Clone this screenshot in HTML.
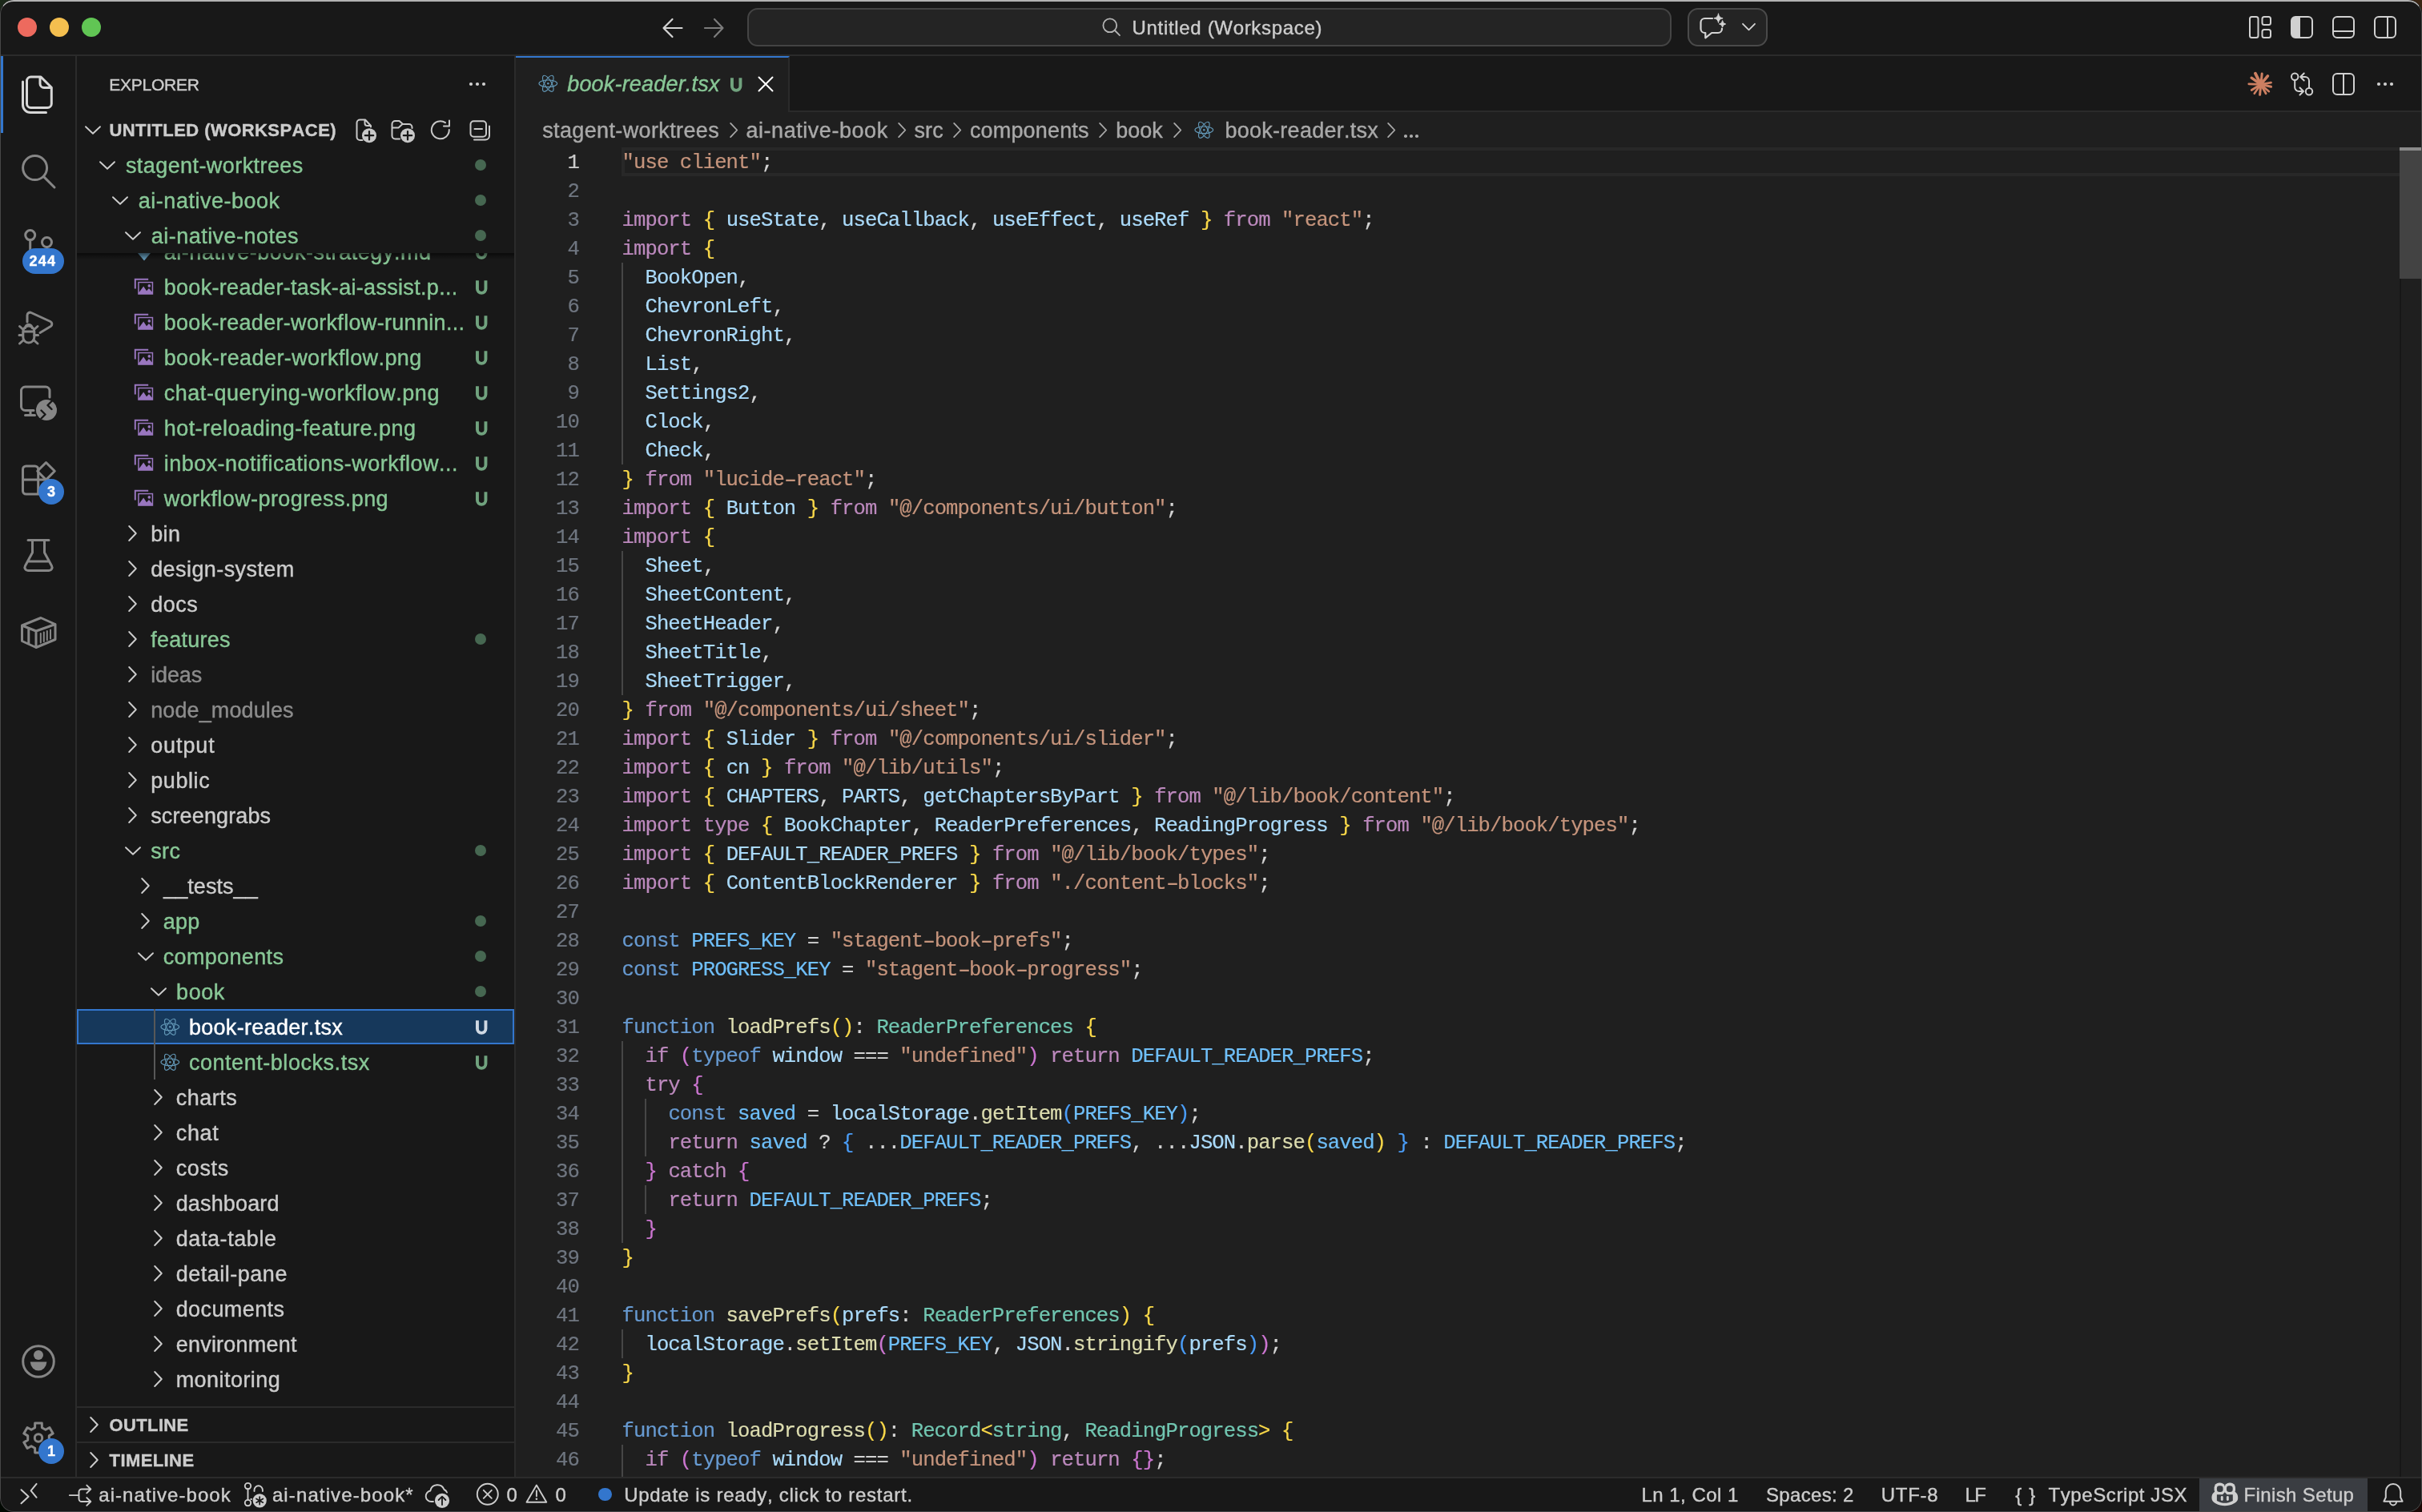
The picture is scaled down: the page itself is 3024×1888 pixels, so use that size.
<!DOCTYPE html><html><head><meta charset="utf-8"><title>VS Code</title><style>
*{box-sizing:border-box;margin:0;padding:0}
html,body{width:3024px;height:1888px;overflow:hidden;background:#0b0f0a}
body{font-family:"Liberation Sans",sans-serif;color:#ccc;position:relative}
#win{position:absolute;left:0;top:0;width:3024px;height:1888px;background:#181818;border-radius:17px;overflow:hidden;will-change:transform;font-kerning:none}
.abs{position:absolute}
.t{position:absolute;white-space:pre;line-height:1;-webkit-text-stroke:0.4px}
.ui{font-size:27px;letter-spacing:.4px}
svg{position:absolute;overflow:visible}
.code{font-family:"Liberation Mono",monospace;font-size:25.6px;letter-spacing:-0.914px;line-height:36px;white-space:pre;position:absolute;left:776.6px;height:36px;color:#d4d4d4;-webkit-text-stroke:0.2px}
.ln{font-family:"Liberation Mono",monospace;font-size:25.6px;letter-spacing:-0.914px;line-height:36px;position:absolute;left:644px;width:79px;text-align:right;color:#6f7680;height:36px;-webkit-text-stroke:0.2px}
.hy{display:inline-block;transform:translateY(1.2px) scaleX(1.6)}
.k{color:#bc89bd}.v{color:#aadafa}.s{color:#c5947c}.b1{color:#f9d849}.b2{color:#cc76d1}.b3{color:#4a9df8}
.c{color:#679ad1}.f{color:#dcdcaf}.ty{color:#71c6b1}.cn{color:#6fbff9}.p{color:#d4d4d4}
</style></head><body><div class="abs" style="left:0;top:0;width:30px;height:30px;background:#1b2819"></div><div class="abs" style="right:0;top:0;width:30px;height:30px;background:#3a2513"></div><div class="abs" style="left:0;bottom:0;width:30px;height:30px;background:#030903"></div><div class="abs" style="right:0;bottom:0;width:30px;height:30px;background:#1a0705"></div><div id="win">
<div class="abs" style="left:0px;top:0px;width:3024px;height:70px;background:#181818;border-bottom:2px solid #2b2b2b"></div>
<div class="abs" style="left:22px;top:22px;width:24px;height:24px;background:#ed6a5e;border-radius:50%"></div>
<div class="abs" style="left:62px;top:22px;width:24px;height:24px;background:#f4bf4f;border-radius:50%"></div>
<div class="abs" style="left:102px;top:22px;width:24px;height:24px;background:#61c554;border-radius:50%"></div>
<div class="abs" style="left:933px;top:10px;width:1154px;height:48px;background:#242424;border:2px solid #444;border-radius:13px"></div>
<div class="t" style="left:1413.5px;top:22.7px;font-size:24px;color:#cccccc;letter-spacing:0.678px;font-weight:400;font-style:normal;">Untitled (Workspace)</div>
<div class="abs" style="left:2107px;top:10px;width:100px;height:48px;background:#242424;border:2px solid #4a4a4a;border-radius:13px"></div>
<div class="abs" style="left:0px;top:70px;width:96px;height:1774px;background:#181818;border-right:2px solid #2b2b2b"></div>
<div class="abs" style="left:0px;top:70px;width:4px;height:96px;background:#3376cd;"></div>
<div class="abs" style="left:96px;top:70px;width:548px;height:1774px;background:#181818;border-right:2px solid #2b2b2b"></div>
<div class="t" style="left:136.3px;top:95.4px;font-size:21px;color:#cccccc;letter-spacing:-0.243px;font-weight:400;font-style:normal;">EXPLORER</div>
<svg style="left:169px;top:302px" width="22" height="24" viewBox="0 0 22 24"><path d="M6 1 H16 V10.5 H22 L11 23.4 L0 10.5 H6 Z" fill="#6398b7"/></svg>
<div class="t" style="left:204.7px;top:302.1px;font-size:27px;color:#88c796;letter-spacing:0.55px;font-weight:400;font-style:normal;">ai-native-book-strategy.md</div>
<svg style="left:592.9px;top:304.9px" width="17" height="20" viewBox="0 0 17 20" fill="none" stroke="#70a27e" stroke-width="3.9" stroke-linecap="butt"><path d="M2.95 1.2 V11.6 a5.25 5.25 0 0 0 10.5 0 V1.2"/></svg>
<svg style="left:167px;top:347px" width="25" height="22" viewBox="0 0 25 22" fill="none"><path d="M1.8 13.5 V1.8 H18.2" stroke="#9976bf" stroke-width="2" stroke-linecap="butt" stroke-linejoin="miter"/><path d="M5.2 4.8 H24.2 V20.8 H5.2 Z" fill="#9976bf"/><path d="M6.7 6.3 H22.7 V17.5 L19 13 L16 16.3 L12.2 10.5 L6.7 18 Z" fill="#181818"/><circle cx="19.3" cy="9.9" r="1.8" fill="#9976bf"/></svg>
<div class="t" style="left:204.7px;top:346.1px;font-size:27px;color:#88c796;letter-spacing:0.315px;font-weight:400;font-style:normal;">book-reader-task-ai-assist.p...</div>
<svg style="left:592.9px;top:348.9px" width="17" height="20" viewBox="0 0 17 20" fill="none" stroke="#70a27e" stroke-width="3.9" stroke-linecap="butt"><path d="M2.95 1.2 V11.6 a5.25 5.25 0 0 0 10.5 0 V1.2"/></svg>
<svg style="left:167px;top:391px" width="25" height="22" viewBox="0 0 25 22" fill="none"><path d="M1.8 13.5 V1.8 H18.2" stroke="#9976bf" stroke-width="2" stroke-linecap="butt" stroke-linejoin="miter"/><path d="M5.2 4.8 H24.2 V20.8 H5.2 Z" fill="#9976bf"/><path d="M6.7 6.3 H22.7 V17.5 L19 13 L16 16.3 L12.2 10.5 L6.7 18 Z" fill="#181818"/><circle cx="19.3" cy="9.9" r="1.8" fill="#9976bf"/></svg>
<div class="t" style="left:204.7px;top:390.1px;font-size:27px;color:#88c796;letter-spacing:0.318px;font-weight:400;font-style:normal;">book-reader-workflow-runnin...</div>
<svg style="left:592.9px;top:392.9px" width="17" height="20" viewBox="0 0 17 20" fill="none" stroke="#70a27e" stroke-width="3.9" stroke-linecap="butt"><path d="M2.95 1.2 V11.6 a5.25 5.25 0 0 0 10.5 0 V1.2"/></svg>
<svg style="left:167px;top:435px" width="25" height="22" viewBox="0 0 25 22" fill="none"><path d="M1.8 13.5 V1.8 H18.2" stroke="#9976bf" stroke-width="2" stroke-linecap="butt" stroke-linejoin="miter"/><path d="M5.2 4.8 H24.2 V20.8 H5.2 Z" fill="#9976bf"/><path d="M6.7 6.3 H22.7 V17.5 L19 13 L16 16.3 L12.2 10.5 L6.7 18 Z" fill="#181818"/><circle cx="19.3" cy="9.9" r="1.8" fill="#9976bf"/></svg>
<div class="t" style="left:204.7px;top:434.1px;font-size:27px;color:#88c796;letter-spacing:0.412px;font-weight:400;font-style:normal;">book-reader-workflow.png</div>
<svg style="left:592.9px;top:436.9px" width="17" height="20" viewBox="0 0 17 20" fill="none" stroke="#70a27e" stroke-width="3.9" stroke-linecap="butt"><path d="M2.95 1.2 V11.6 a5.25 5.25 0 0 0 10.5 0 V1.2"/></svg>
<svg style="left:167px;top:479px" width="25" height="22" viewBox="0 0 25 22" fill="none"><path d="M1.8 13.5 V1.8 H18.2" stroke="#9976bf" stroke-width="2" stroke-linecap="butt" stroke-linejoin="miter"/><path d="M5.2 4.8 H24.2 V20.8 H5.2 Z" fill="#9976bf"/><path d="M6.7 6.3 H22.7 V17.5 L19 13 L16 16.3 L12.2 10.5 L6.7 18 Z" fill="#181818"/><circle cx="19.3" cy="9.9" r="1.8" fill="#9976bf"/></svg>
<div class="t" style="left:204.7px;top:478.1px;font-size:27px;color:#88c796;letter-spacing:0.542px;font-weight:400;font-style:normal;">chat-querying-workflow.png</div>
<svg style="left:592.9px;top:480.9px" width="17" height="20" viewBox="0 0 17 20" fill="none" stroke="#70a27e" stroke-width="3.9" stroke-linecap="butt"><path d="M2.95 1.2 V11.6 a5.25 5.25 0 0 0 10.5 0 V1.2"/></svg>
<svg style="left:167px;top:523px" width="25" height="22" viewBox="0 0 25 22" fill="none"><path d="M1.8 13.5 V1.8 H18.2" stroke="#9976bf" stroke-width="2" stroke-linecap="butt" stroke-linejoin="miter"/><path d="M5.2 4.8 H24.2 V20.8 H5.2 Z" fill="#9976bf"/><path d="M6.7 6.3 H22.7 V17.5 L19 13 L16 16.3 L12.2 10.5 L6.7 18 Z" fill="#181818"/><circle cx="19.3" cy="9.9" r="1.8" fill="#9976bf"/></svg>
<div class="t" style="left:204.7px;top:522.1px;font-size:27px;color:#88c796;letter-spacing:0.462px;font-weight:400;font-style:normal;">hot-reloading-feature.png</div>
<svg style="left:592.9px;top:524.9px" width="17" height="20" viewBox="0 0 17 20" fill="none" stroke="#70a27e" stroke-width="3.9" stroke-linecap="butt"><path d="M2.95 1.2 V11.6 a5.25 5.25 0 0 0 10.5 0 V1.2"/></svg>
<svg style="left:167px;top:567px" width="25" height="22" viewBox="0 0 25 22" fill="none"><path d="M1.8 13.5 V1.8 H18.2" stroke="#9976bf" stroke-width="2" stroke-linecap="butt" stroke-linejoin="miter"/><path d="M5.2 4.8 H24.2 V20.8 H5.2 Z" fill="#9976bf"/><path d="M6.7 6.3 H22.7 V17.5 L19 13 L16 16.3 L12.2 10.5 L6.7 18 Z" fill="#181818"/><circle cx="19.3" cy="9.9" r="1.8" fill="#9976bf"/></svg>
<div class="t" style="left:204.7px;top:566.1px;font-size:27px;color:#88c796;letter-spacing:0.472px;font-weight:400;font-style:normal;">inbox-notifications-workflow...</div>
<svg style="left:592.9px;top:568.9px" width="17" height="20" viewBox="0 0 17 20" fill="none" stroke="#70a27e" stroke-width="3.9" stroke-linecap="butt"><path d="M2.95 1.2 V11.6 a5.25 5.25 0 0 0 10.5 0 V1.2"/></svg>
<svg style="left:167px;top:611px" width="25" height="22" viewBox="0 0 25 22" fill="none"><path d="M1.8 13.5 V1.8 H18.2" stroke="#9976bf" stroke-width="2" stroke-linecap="butt" stroke-linejoin="miter"/><path d="M5.2 4.8 H24.2 V20.8 H5.2 Z" fill="#9976bf"/><path d="M6.7 6.3 H22.7 V17.5 L19 13 L16 16.3 L12.2 10.5 L6.7 18 Z" fill="#181818"/><circle cx="19.3" cy="9.9" r="1.8" fill="#9976bf"/></svg>
<div class="t" style="left:204.77px;top:610.1px;font-size:27px;color:#88c796;letter-spacing:0.411px;font-weight:400;font-style:normal;">workflow-progress.png</div>
<svg style="left:592.9px;top:612.9px" width="17" height="20" viewBox="0 0 17 20" fill="none" stroke="#70a27e" stroke-width="3.9" stroke-linecap="butt"><path d="M2.95 1.2 V11.6 a5.25 5.25 0 0 0 10.5 0 V1.2"/></svg>
<svg style="left:159.5px;top:656.0px" width="11.0" height="20.0" viewBox="0 0 11 20" fill="none" stroke="#cccccc" stroke-width="1.9" stroke-linecap="round" stroke-linejoin="round"><path d="M1.2 1 L9.8 10 L1.2 19"/></svg>
<div class="t" style="left:188.2px;top:654.1px;font-size:27px;color:#cccccc;letter-spacing:0.378px;font-weight:400;font-style:normal;">bin</div>
<svg style="left:159.5px;top:700.0px" width="11.0" height="20.0" viewBox="0 0 11 20" fill="none" stroke="#cccccc" stroke-width="1.9" stroke-linecap="round" stroke-linejoin="round"><path d="M1.2 1 L9.8 10 L1.2 19"/></svg>
<div class="t" style="left:188.2px;top:698.1px;font-size:27px;color:#cccccc;letter-spacing:0.418px;font-weight:400;font-style:normal;">design-system</div>
<svg style="left:159.5px;top:744.0px" width="11.0" height="20.0" viewBox="0 0 11 20" fill="none" stroke="#cccccc" stroke-width="1.9" stroke-linecap="round" stroke-linejoin="round"><path d="M1.2 1 L9.8 10 L1.2 19"/></svg>
<div class="t" style="left:188.2px;top:742.1px;font-size:27px;color:#cccccc;letter-spacing:0.488px;font-weight:400;font-style:normal;">docs</div>
<svg style="left:159.5px;top:788.0px" width="11.0" height="20.0" viewBox="0 0 11 20" fill="none" stroke="#cccccc" stroke-width="1.9" stroke-linecap="round" stroke-linejoin="round"><path d="M1.2 1 L9.8 10 L1.2 19"/></svg>
<div class="t" style="left:188.2px;top:786.1px;font-size:27px;color:#88c796;letter-spacing:0.237px;font-weight:400;font-style:normal;">features</div>
<div class="abs" style="left:593px;top:791px;width:14px;height:14px;background:#466751;border-radius:50%"></div>
<svg style="left:159.5px;top:832.0px" width="11.0" height="20.0" viewBox="0 0 11 20" fill="none" stroke="#cccccc" stroke-width="1.9" stroke-linecap="round" stroke-linejoin="round"><path d="M1.2 1 L9.8 10 L1.2 19"/></svg>
<div class="t" style="left:188.2px;top:830.1px;font-size:27px;color:#8c8c8c;letter-spacing:-0.132px;font-weight:400;font-style:normal;">ideas</div>
<svg style="left:159.5px;top:876.0px" width="11.0" height="20.0" viewBox="0 0 11 20" fill="none" stroke="#cccccc" stroke-width="1.9" stroke-linecap="round" stroke-linejoin="round"><path d="M1.2 1 L9.8 10 L1.2 19"/></svg>
<div class="t" style="left:188.2px;top:874.1px;font-size:27px;color:#8c8c8c;letter-spacing:0.107px;font-weight:400;font-style:normal;">node_modules</div>
<svg style="left:159.5px;top:920.0px" width="11.0" height="20.0" viewBox="0 0 11 20" fill="none" stroke="#cccccc" stroke-width="1.9" stroke-linecap="round" stroke-linejoin="round"><path d="M1.2 1 L9.8 10 L1.2 19"/></svg>
<div class="t" style="left:188.2px;top:918.1px;font-size:27px;color:#cccccc;letter-spacing:0.908px;font-weight:400;font-style:normal;">output</div>
<svg style="left:159.5px;top:964.0px" width="11.0" height="20.0" viewBox="0 0 11 20" fill="none" stroke="#cccccc" stroke-width="1.9" stroke-linecap="round" stroke-linejoin="round"><path d="M1.2 1 L9.8 10 L1.2 19"/></svg>
<div class="t" style="left:188.2px;top:962.1px;font-size:27px;color:#cccccc;letter-spacing:0.592px;font-weight:400;font-style:normal;">public</div>
<svg style="left:159.5px;top:1008.0px" width="11.0" height="20.0" viewBox="0 0 11 20" fill="none" stroke="#cccccc" stroke-width="1.9" stroke-linecap="round" stroke-linejoin="round"><path d="M1.2 1 L9.8 10 L1.2 19"/></svg>
<div class="t" style="left:188.2px;top:1006.1px;font-size:27px;color:#cccccc;letter-spacing:0.133px;font-weight:400;font-style:normal;">screengrabs</div>
<svg style="left:156.0px;top:1056.5px" width="20.0" height="11.0" viewBox="0 0 20 11" fill="none" stroke="#cccccc" stroke-width="1.9" stroke-linecap="round" stroke-linejoin="round"><path d="M1 1.2 L10 9.8 L19 1.2"/></svg>
<div class="t" style="left:188.2px;top:1050.1px;font-size:27px;color:#88c796;letter-spacing:0.411px;font-weight:400;font-style:normal;">src</div>
<div class="abs" style="left:593px;top:1055px;width:14px;height:14px;background:#466751;border-radius:50%"></div>
<svg style="left:175.5px;top:1096.0px" width="11.0" height="20.0" viewBox="0 0 11 20" fill="none" stroke="#cccccc" stroke-width="1.9" stroke-linecap="round" stroke-linejoin="round"><path d="M1.2 1 L9.8 10 L1.2 19"/></svg>
<div class="t" style="left:204.17px;top:1094.1px;font-size:27px;color:#cccccc;letter-spacing:0.056px;font-weight:400;font-style:normal;">__tests__</div>
<svg style="left:175.5px;top:1140.0px" width="11.0" height="20.0" viewBox="0 0 11 20" fill="none" stroke="#cccccc" stroke-width="1.9" stroke-linecap="round" stroke-linejoin="round"><path d="M1.2 1 L9.8 10 L1.2 19"/></svg>
<div class="t" style="left:203.7px;top:1138.1px;font-size:27px;color:#88c796;letter-spacing:0.239px;font-weight:400;font-style:normal;">app</div>
<div class="abs" style="left:593px;top:1143px;width:14px;height:14px;background:#466751;border-radius:50%"></div>
<svg style="left:172.0px;top:1188.5px" width="20.0" height="11.0" viewBox="0 0 20 11" fill="none" stroke="#cccccc" stroke-width="1.9" stroke-linecap="round" stroke-linejoin="round"><path d="M1 1.2 L10 9.8 L19 1.2"/></svg>
<div class="t" style="left:203.7px;top:1182.1px;font-size:27px;color:#88c796;letter-spacing:0.346px;font-weight:400;font-style:normal;">components</div>
<div class="abs" style="left:593px;top:1187px;width:14px;height:14px;background:#466751;border-radius:50%"></div>
<svg style="left:188.0px;top:1232.5px" width="20.0" height="11.0" viewBox="0 0 20 11" fill="none" stroke="#cccccc" stroke-width="1.9" stroke-linecap="round" stroke-linejoin="round"><path d="M1 1.2 L10 9.8 L19 1.2"/></svg>
<div class="t" style="left:220.1px;top:1226.1px;font-size:27px;color:#88c796;letter-spacing:0.537px;font-weight:400;font-style:normal;">book</div>
<div class="abs" style="left:593px;top:1231px;width:14px;height:14px;background:#466751;border-radius:50%"></div>
<div class="abs" style="left:96px;top:1260px;width:546px;height:44px;background:#16385b;border:2px solid #3376cd"></div>
<svg style="left:199.7px;top:1269.7px" width="24.6" height="24.6" viewBox="-13 -13 26 26" fill="none" stroke="#6398b7" stroke-width="1.15"><ellipse rx="12" ry="4.6"/><ellipse rx="12" ry="4.6" transform="rotate(60)"/><ellipse rx="12" ry="4.6" transform="rotate(120)"/><circle r="1.3" fill="#6398b7" stroke="none"/></svg>
<div class="t" style="left:235.9px;top:1270.1px;font-size:27px;color:#ffffff;letter-spacing:0.307px;font-weight:400;font-style:normal;">book-reader.tsx</div>
<svg style="left:592.9px;top:1272.9px" width="17" height="20" viewBox="0 0 17 20" fill="none" stroke="#cfd8e3" stroke-width="3.9" stroke-linecap="butt"><path d="M2.95 1.2 V11.6 a5.25 5.25 0 0 0 10.5 0 V1.2"/></svg>
<svg style="left:199.7px;top:1313.7px" width="24.6" height="24.6" viewBox="-13 -13 26 26" fill="none" stroke="#6398b7" stroke-width="1.15"><ellipse rx="12" ry="4.6"/><ellipse rx="12" ry="4.6" transform="rotate(60)"/><ellipse rx="12" ry="4.6" transform="rotate(120)"/><circle r="1.3" fill="#6398b7" stroke="none"/></svg>
<div class="t" style="left:235.9px;top:1314.1px;font-size:27px;color:#88c796;letter-spacing:0.543px;font-weight:400;font-style:normal;">content-blocks.tsx</div>
<svg style="left:592.9px;top:1316.9px" width="17" height="20" viewBox="0 0 17 20" fill="none" stroke="#70a27e" stroke-width="3.9" stroke-linecap="butt"><path d="M2.95 1.2 V11.6 a5.25 5.25 0 0 0 10.5 0 V1.2"/></svg>
<svg style="left:191.5px;top:1360.0px" width="11.0" height="20.0" viewBox="0 0 11 20" fill="none" stroke="#cccccc" stroke-width="1.9" stroke-linecap="round" stroke-linejoin="round"><path d="M1.2 1 L9.8 10 L1.2 19"/></svg>
<div class="t" style="left:219.7px;top:1358.1px;font-size:27px;color:#cccccc;letter-spacing:0.518px;font-weight:400;font-style:normal;">charts</div>
<svg style="left:191.5px;top:1404.0px" width="11.0" height="20.0" viewBox="0 0 11 20" fill="none" stroke="#cccccc" stroke-width="1.9" stroke-linecap="round" stroke-linejoin="round"><path d="M1.2 1 L9.8 10 L1.2 19"/></svg>
<div class="t" style="left:219.7px;top:1402.1px;font-size:27px;color:#cccccc;letter-spacing:0.69px;font-weight:400;font-style:normal;">chat</div>
<svg style="left:191.5px;top:1448.0px" width="11.0" height="20.0" viewBox="0 0 11 20" fill="none" stroke="#cccccc" stroke-width="1.9" stroke-linecap="round" stroke-linejoin="round"><path d="M1.2 1 L9.8 10 L1.2 19"/></svg>
<div class="t" style="left:219.7px;top:1446.1px;font-size:27px;color:#cccccc;letter-spacing:0.614px;font-weight:400;font-style:normal;">costs</div>
<svg style="left:191.5px;top:1492.0px" width="11.0" height="20.0" viewBox="0 0 11 20" fill="none" stroke="#cccccc" stroke-width="1.9" stroke-linecap="round" stroke-linejoin="round"><path d="M1.2 1 L9.8 10 L1.2 19"/></svg>
<div class="t" style="left:219.7px;top:1490.1px;font-size:27px;color:#cccccc;letter-spacing:0.153px;font-weight:400;font-style:normal;">dashboard</div>
<svg style="left:191.5px;top:1536.0px" width="11.0" height="20.0" viewBox="0 0 11 20" fill="none" stroke="#cccccc" stroke-width="1.9" stroke-linecap="round" stroke-linejoin="round"><path d="M1.2 1 L9.8 10 L1.2 19"/></svg>
<div class="t" style="left:219.7px;top:1534.1px;font-size:27px;color:#cccccc;letter-spacing:0.58px;font-weight:400;font-style:normal;">data-table</div>
<svg style="left:191.5px;top:1580.0px" width="11.0" height="20.0" viewBox="0 0 11 20" fill="none" stroke="#cccccc" stroke-width="1.9" stroke-linecap="round" stroke-linejoin="round"><path d="M1.2 1 L9.8 10 L1.2 19"/></svg>
<div class="t" style="left:219.7px;top:1578.1px;font-size:27px;color:#cccccc;letter-spacing:0.512px;font-weight:400;font-style:normal;">detail-pane</div>
<svg style="left:191.5px;top:1624.0px" width="11.0" height="20.0" viewBox="0 0 11 20" fill="none" stroke="#cccccc" stroke-width="1.9" stroke-linecap="round" stroke-linejoin="round"><path d="M1.2 1 L9.8 10 L1.2 19"/></svg>
<div class="t" style="left:219.7px;top:1622.1px;font-size:27px;color:#cccccc;letter-spacing:0.4px;font-weight:400;font-style:normal;">documents</div>
<svg style="left:191.5px;top:1668.0px" width="11.0" height="20.0" viewBox="0 0 11 20" fill="none" stroke="#cccccc" stroke-width="1.9" stroke-linecap="round" stroke-linejoin="round"><path d="M1.2 1 L9.8 10 L1.2 19"/></svg>
<div class="t" style="left:219.7px;top:1666.1px;font-size:27px;color:#cccccc;letter-spacing:0.223px;font-weight:400;font-style:normal;">environment</div>
<svg style="left:191.5px;top:1712.0px" width="11.0" height="20.0" viewBox="0 0 11 20" fill="none" stroke="#cccccc" stroke-width="1.9" stroke-linecap="round" stroke-linejoin="round"><path d="M1.2 1 L9.8 10 L1.2 19"/></svg>
<div class="t" style="left:219.7px;top:1710.1px;font-size:27px;color:#cccccc;letter-spacing:0.446px;font-weight:400;font-style:normal;">monitoring</div>
<div class="abs" style="left:192px;top:1260px;width:2px;height:88px;background:#585858;"></div>
<div class="abs" style="left:96px;top:184px;width:546px;height:132px;background:#181818;"></div>
<div class="abs" style="left:96px;top:316px;width:546px;height:8px;background:linear-gradient(to bottom,rgba(0,0,0,.55),rgba(0,0,0,0))"></div>
<svg style="left:124.0px;top:200.5px" width="20.0" height="11.0" viewBox="0 0 20 11" fill="none" stroke="#cccccc" stroke-width="1.9" stroke-linecap="round" stroke-linejoin="round"><path d="M1 1.2 L10 9.8 L19 1.2"/></svg>
<div class="t" style="left:156.9px;top:194.1px;font-size:27px;color:#88c796;letter-spacing:0.426px;font-weight:400;font-style:normal;">stagent-worktrees</div>
<div class="abs" style="left:593px;top:199px;width:14px;height:14px;background:#466751;border-radius:50%"></div>
<svg style="left:140.0px;top:244.5px" width="20.0" height="11.0" viewBox="0 0 20 11" fill="none" stroke="#cccccc" stroke-width="1.9" stroke-linecap="round" stroke-linejoin="round"><path d="M1 1.2 L10 9.8 L19 1.2"/></svg>
<div class="t" style="left:172.8px;top:238.1px;font-size:27px;color:#88c796;letter-spacing:0.516px;font-weight:400;font-style:normal;">ai-native-book</div>
<div class="abs" style="left:593px;top:243px;width:14px;height:14px;background:#466751;border-radius:50%"></div>
<svg style="left:156.0px;top:288.5px" width="20.0" height="11.0" viewBox="0 0 20 11" fill="none" stroke="#cccccc" stroke-width="1.9" stroke-linecap="round" stroke-linejoin="round"><path d="M1 1.2 L10 9.8 L19 1.2"/></svg>
<div class="t" style="left:188.7px;top:282.1px;font-size:27px;color:#88c796;letter-spacing:0.484px;font-weight:400;font-style:normal;">ai-native-notes</div>
<div class="abs" style="left:593px;top:287px;width:14px;height:14px;background:#466751;border-radius:50%"></div>
<div class="abs" style="left:96px;top:140px;width:546px;height:44px;background:#181818;"></div>
<div class="t" style="left:136.4px;top:152.0px;font-size:22px;color:#cccccc;letter-spacing:0.434px;font-weight:700;font-style:normal;">UNTITLED (WORKSPACE)</div>
<svg style="left:105.5px;top:156.5px" width="20.0" height="11.0" viewBox="0 0 20 11" fill="none" stroke="#cccccc" stroke-width="1.9" stroke-linecap="round" stroke-linejoin="round"><path d="M1 1.2 L10 9.8 L19 1.2"/></svg>
<div class="abs" style="left:96px;top:1744px;width:546px;height:100px;background:#181818;"></div>
<div class="abs" style="left:96px;top:1756px;width:546px;height:2px;background:#2b2b2b;"></div>
<div class="abs" style="left:96px;top:1800px;width:546px;height:2px;background:#2b2b2b;"></div>
<svg style="left:111.5px;top:1769.0px" width="11.0" height="20.0" viewBox="0 0 11 20" fill="none" stroke="#cccccc" stroke-width="1.9" stroke-linecap="round" stroke-linejoin="round"><path d="M1.2 1 L9.8 10 L1.2 19"/></svg>
<div class="t" style="left:136.6px;top:1769.0px;font-size:22px;color:#cccccc;letter-spacing:0.353px;font-weight:700;font-style:normal;">OUTLINE</div>
<svg style="left:111.5px;top:1813.0px" width="11.0" height="20.0" viewBox="0 0 11 20" fill="none" stroke="#cccccc" stroke-width="1.9" stroke-linecap="round" stroke-linejoin="round"><path d="M1.2 1 L9.8 10 L1.2 19"/></svg>
<div class="t" style="left:136.6px;top:1813.0px;font-size:22px;color:#cccccc;letter-spacing:0.402px;font-weight:700;font-style:normal;">TIMELINE</div>
<div class="abs" style="left:644px;top:70px;width:2380px;height:70px;background:#181818;border-bottom:2px solid #2b2b2b"></div>
<div class="abs" style="left:644px;top:140px;width:2380px;height:1704px;background:#1f1f1f;"></div>
<div class="abs" style="left:644px;top:70px;width:342px;height:70px;background:#1f1f1f;border-top:2px solid #3376cd;border-right:2px solid #2b2b2b"></div>
<svg style="left:671.5px;top:92.2px" width="24.6" height="24.6" viewBox="-13 -13 26 26" fill="none" stroke="#6398b7" stroke-width="1.15"><ellipse rx="12" ry="4.6"/><ellipse rx="12" ry="4.6" transform="rotate(60)"/><ellipse rx="12" ry="4.6" transform="rotate(120)"/><circle r="1.3" fill="#6398b7" stroke="none"/></svg>
<div class="t" style="left:708.2px;top:92.4px;font-size:27px;color:#88c796;letter-spacing:0.187px;font-weight:400;font-style:italic;">book-reader.tsx</div>
<svg style="left:910.6px;top:95.7px" width="17" height="20" viewBox="0 0 17 20" fill="none" stroke="#70a27e" stroke-width="3.9" stroke-linecap="butt"><path d="M2.95 1.2 V11.6 a5.25 5.25 0 0 0 10.5 0 V1.2"/></svg>
<svg style="left:946px;top:95px" width="20" height="20" viewBox="0 0 20 20" fill="none" stroke="#fff" stroke-width="2" stroke-linecap="round"><path d="M1.5 1.5 L18.5 18.5 M18.5 1.5 L1.5 18.5"/></svg>
<div class="t" style="left:677.2px;top:149.7px;font-size:27px;color:#a9a9a9;letter-spacing:0.37px;font-weight:400;font-style:normal;">stagent-worktrees</div>
<div class="t" style="left:931.4px;top:149.7px;font-size:27px;color:#a9a9a9;letter-spacing:0.554px;font-weight:400;font-style:normal;">ai-native-book</div>
<div class="t" style="left:1141.5px;top:149.7px;font-size:27px;color:#a9a9a9;letter-spacing:0.111px;font-weight:400;font-style:normal;">src</div>
<div class="t" style="left:1210.9px;top:149.7px;font-size:27px;color:#a9a9a9;letter-spacing:0.169px;font-weight:400;font-style:normal;">components</div>
<div class="t" style="left:1393.2px;top:149.7px;font-size:27px;color:#a9a9a9;letter-spacing:-0.03px;font-weight:400;font-style:normal;">book</div>
<div class="t" style="left:1529.5px;top:149.7px;font-size:27px;color:#a9a9a9;letter-spacing:0.264px;font-weight:400;font-style:normal;">book-reader.tsx</div>
<div class="abs" style="left:1753.4px;top:168.2px;width:3.6px;height:3.6px;background:#a9a9a9;border-radius:50%"></div>
<div class="abs" style="left:1760.4px;top:168.2px;width:3.6px;height:3.6px;background:#a9a9a9;border-radius:50%"></div>
<div class="abs" style="left:1767.4px;top:168.2px;width:3.6px;height:3.6px;background:#a9a9a9;border-radius:50%"></div>
<svg style="left:910.775px;top:153.0px" width="10.45" height="19.0" viewBox="0 0 11 20" fill="none" stroke="#a9a9a9" stroke-width="1.9" stroke-linecap="round" stroke-linejoin="round"><path d="M1.2 1 L9.8 10 L1.2 19"/></svg>
<svg style="left:1120.775px;top:153.0px" width="10.45" height="19.0" viewBox="0 0 11 20" fill="none" stroke="#a9a9a9" stroke-width="1.9" stroke-linecap="round" stroke-linejoin="round"><path d="M1.2 1 L9.8 10 L1.2 19"/></svg>
<svg style="left:1189.775px;top:153.0px" width="10.45" height="19.0" viewBox="0 0 11 20" fill="none" stroke="#a9a9a9" stroke-width="1.9" stroke-linecap="round" stroke-linejoin="round"><path d="M1.2 1 L9.8 10 L1.2 19"/></svg>
<svg style="left:1372.275px;top:153.0px" width="10.45" height="19.0" viewBox="0 0 11 20" fill="none" stroke="#a9a9a9" stroke-width="1.9" stroke-linecap="round" stroke-linejoin="round"><path d="M1.2 1 L9.8 10 L1.2 19"/></svg>
<svg style="left:1464.775px;top:153.0px" width="10.45" height="19.0" viewBox="0 0 11 20" fill="none" stroke="#a9a9a9" stroke-width="1.9" stroke-linecap="round" stroke-linejoin="round"><path d="M1.2 1 L9.8 10 L1.2 19"/></svg>
<svg style="left:1732.275px;top:153.0px" width="10.45" height="19.0" viewBox="0 0 11 20" fill="none" stroke="#a9a9a9" stroke-width="1.9" stroke-linecap="round" stroke-linejoin="round"><path d="M1.2 1 L9.8 10 L1.2 19"/></svg>
<svg style="left:1491.4px;top:149.7px" width="24.6" height="24.6" viewBox="-13 -13 26 26" fill="none" stroke="#6398b7" stroke-width="1.15"><ellipse rx="12" ry="4.6"/><ellipse rx="12" ry="4.6" transform="rotate(60)"/><ellipse rx="12" ry="4.6" transform="rotate(120)"/><circle r="1.3" fill="#6398b7" stroke="none"/></svg>
<div class="abs" style="left:776px;top:184px;width:2248px;height:36px;background:transparent;border:4px solid #282828"></div>
<div class="abs" style="left:2996px;top:184px;width:28px;height:164px;background:#434343;"></div>
<div class="abs" style="left:2996px;top:184px;width:28px;height:4px;background:#8a8a8a;"></div>
<div class="abs" style="left:2996px;top:348px;width:2px;height:1496px;background:#171717;"></div>
<div class="ln" style="top:185.6px;color:#cccccc">1</div>
<div class="code" style="top:185.6px"><span class="s">&quot;use client&quot;</span>;</div>
<div class="ln" style="top:221.6px;color:#6f7680">2</div>
<div class="code" style="top:221.6px"></div>
<div class="ln" style="top:257.6px;color:#6f7680">3</div>
<div class="code" style="top:257.6px"><span class="k">import</span> <span class="b1">{</span> <span class="v">useState</span>, <span class="v">useCallback</span>, <span class="v">useEffect</span>, <span class="v">useRef</span> <span class="b1">}</span> <span class="k">from</span> <span class="s">&quot;react&quot;</span>;</div>
<div class="ln" style="top:293.6px;color:#6f7680">4</div>
<div class="code" style="top:293.6px"><span class="k">import</span> <span class="b1">{</span></div>
<div class="ln" style="top:329.6px;color:#6f7680">5</div>
<div class="code" style="top:329.6px">  <span class="v">BookOpen</span>,</div>
<div class="ln" style="top:365.6px;color:#6f7680">6</div>
<div class="code" style="top:365.6px">  <span class="v">ChevronLeft</span>,</div>
<div class="ln" style="top:401.6px;color:#6f7680">7</div>
<div class="code" style="top:401.6px">  <span class="v">ChevronRight</span>,</div>
<div class="ln" style="top:437.6px;color:#6f7680">8</div>
<div class="code" style="top:437.6px">  <span class="v">List</span>,</div>
<div class="ln" style="top:473.6px;color:#6f7680">9</div>
<div class="code" style="top:473.6px">  <span class="v">Settings2</span>,</div>
<div class="ln" style="top:509.6px;color:#6f7680">10</div>
<div class="code" style="top:509.6px">  <span class="v">Clock</span>,</div>
<div class="ln" style="top:545.6px;color:#6f7680">11</div>
<div class="code" style="top:545.6px">  <span class="v">Check</span>,</div>
<div class="ln" style="top:581.6px;color:#6f7680">12</div>
<div class="code" style="top:581.6px"><span class="b1">}</span> <span class="k">from</span> <span class="s">&quot;lucide<span class="hy">-</span>react&quot;</span>;</div>
<div class="ln" style="top:617.6px;color:#6f7680">13</div>
<div class="code" style="top:617.6px"><span class="k">import</span> <span class="b1">{</span> <span class="v">Button</span> <span class="b1">}</span> <span class="k">from</span> <span class="s">&quot;@/components/ui/button&quot;</span>;</div>
<div class="ln" style="top:653.6px;color:#6f7680">14</div>
<div class="code" style="top:653.6px"><span class="k">import</span> <span class="b1">{</span></div>
<div class="ln" style="top:689.6px;color:#6f7680">15</div>
<div class="code" style="top:689.6px">  <span class="v">Sheet</span>,</div>
<div class="ln" style="top:725.6px;color:#6f7680">16</div>
<div class="code" style="top:725.6px">  <span class="v">SheetContent</span>,</div>
<div class="ln" style="top:761.6px;color:#6f7680">17</div>
<div class="code" style="top:761.6px">  <span class="v">SheetHeader</span>,</div>
<div class="ln" style="top:797.6px;color:#6f7680">18</div>
<div class="code" style="top:797.6px">  <span class="v">SheetTitle</span>,</div>
<div class="ln" style="top:833.6px;color:#6f7680">19</div>
<div class="code" style="top:833.6px">  <span class="v">SheetTrigger</span>,</div>
<div class="ln" style="top:869.6px;color:#6f7680">20</div>
<div class="code" style="top:869.6px"><span class="b1">}</span> <span class="k">from</span> <span class="s">&quot;@/components/ui/sheet&quot;</span>;</div>
<div class="ln" style="top:905.6px;color:#6f7680">21</div>
<div class="code" style="top:905.6px"><span class="k">import</span> <span class="b1">{</span> <span class="v">Slider</span> <span class="b1">}</span> <span class="k">from</span> <span class="s">&quot;@/components/ui/slider&quot;</span>;</div>
<div class="ln" style="top:941.6px;color:#6f7680">22</div>
<div class="code" style="top:941.6px"><span class="k">import</span> <span class="b1">{</span> <span class="v">cn</span> <span class="b1">}</span> <span class="k">from</span> <span class="s">&quot;@/lib/utils&quot;</span>;</div>
<div class="ln" style="top:977.6px;color:#6f7680">23</div>
<div class="code" style="top:977.6px"><span class="k">import</span> <span class="b1">{</span> <span class="v">CHAPTERS</span>, <span class="v">PARTS</span>, <span class="v">getChaptersByPart</span> <span class="b1">}</span> <span class="k">from</span> <span class="s">&quot;@/lib/book/content&quot;</span>;</div>
<div class="ln" style="top:1013.6px;color:#6f7680">24</div>
<div class="code" style="top:1013.6px"><span class="k">import</span> <span class="k">type</span> <span class="b1">{</span> <span class="v">BookChapter</span>, <span class="v">ReaderPreferences</span>, <span class="v">ReadingProgress</span> <span class="b1">}</span> <span class="k">from</span> <span class="s">&quot;@/lib/book/types&quot;</span>;</div>
<div class="ln" style="top:1049.6px;color:#6f7680">25</div>
<div class="code" style="top:1049.6px"><span class="k">import</span> <span class="b1">{</span> <span class="v">DEFAULT_READER_PREFS</span> <span class="b1">}</span> <span class="k">from</span> <span class="s">&quot;@/lib/book/types&quot;</span>;</div>
<div class="ln" style="top:1085.6px;color:#6f7680">26</div>
<div class="code" style="top:1085.6px"><span class="k">import</span> <span class="b1">{</span> <span class="v">ContentBlockRenderer</span> <span class="b1">}</span> <span class="k">from</span> <span class="s">&quot;./content<span class="hy">-</span>blocks&quot;</span>;</div>
<div class="ln" style="top:1121.6px;color:#6f7680">27</div>
<div class="code" style="top:1121.6px"></div>
<div class="ln" style="top:1157.6px;color:#6f7680">28</div>
<div class="code" style="top:1157.6px"><span class="c">const</span> <span class="cn">PREFS_KEY</span> = <span class="s">&quot;stagent<span class="hy">-</span>book<span class="hy">-</span>prefs&quot;</span>;</div>
<div class="ln" style="top:1193.6px;color:#6f7680">29</div>
<div class="code" style="top:1193.6px"><span class="c">const</span> <span class="cn">PROGRESS_KEY</span> = <span class="s">&quot;stagent<span class="hy">-</span>book<span class="hy">-</span>progress&quot;</span>;</div>
<div class="ln" style="top:1229.6px;color:#6f7680">30</div>
<div class="code" style="top:1229.6px"></div>
<div class="ln" style="top:1265.6px;color:#6f7680">31</div>
<div class="code" style="top:1265.6px"><span class="c">function</span> <span class="f">loadPrefs</span><span class="b1">()</span>: <span class="ty">ReaderPreferences</span> <span class="b1">{</span></div>
<div class="ln" style="top:1301.6px;color:#6f7680">32</div>
<div class="code" style="top:1301.6px">  <span class="k">if</span> <span class="b2">(</span><span class="c">typeof</span> <span class="v">window</span> === <span class="s">&quot;undefined&quot;</span><span class="b2">)</span> <span class="k">return</span> <span class="cn">DEFAULT_READER_PREFS</span>;</div>
<div class="ln" style="top:1337.6px;color:#6f7680">33</div>
<div class="code" style="top:1337.6px">  <span class="k">try</span> <span class="b2">{</span></div>
<div class="ln" style="top:1373.6px;color:#6f7680">34</div>
<div class="code" style="top:1373.6px">    <span class="c">const</span> <span class="cn">saved</span> = <span class="v">localStorage</span>.<span class="f">getItem</span><span class="b3">(</span><span class="cn">PREFS_KEY</span><span class="b3">)</span>;</div>
<div class="ln" style="top:1409.6px;color:#6f7680">35</div>
<div class="code" style="top:1409.6px">    <span class="k">return</span> <span class="cn">saved</span> ? <span class="b3">{</span> ...<span class="cn">DEFAULT_READER_PREFS</span>, ...<span class="v">JSON</span>.<span class="f">parse</span><span class="b1">(</span><span class="cn">saved</span><span class="b1">)</span> <span class="b3">}</span> : <span class="cn">DEFAULT_READER_PREFS</span>;</div>
<div class="ln" style="top:1445.6px;color:#6f7680">36</div>
<div class="code" style="top:1445.6px">  <span class="b2">}</span> <span class="k">catch</span> <span class="b2">{</span></div>
<div class="ln" style="top:1481.6px;color:#6f7680">37</div>
<div class="code" style="top:1481.6px">    <span class="k">return</span> <span class="cn">DEFAULT_READER_PREFS</span>;</div>
<div class="ln" style="top:1517.6px;color:#6f7680">38</div>
<div class="code" style="top:1517.6px">  <span class="b2">}</span></div>
<div class="ln" style="top:1553.6px;color:#6f7680">39</div>
<div class="code" style="top:1553.6px"><span class="b1">}</span></div>
<div class="ln" style="top:1589.6px;color:#6f7680">40</div>
<div class="code" style="top:1589.6px"></div>
<div class="ln" style="top:1625.6px;color:#6f7680">41</div>
<div class="code" style="top:1625.6px"><span class="c">function</span> <span class="f">savePrefs</span><span class="b1">(</span><span class="v">prefs</span>: <span class="ty">ReaderPreferences</span><span class="b1">)</span> <span class="b1">{</span></div>
<div class="ln" style="top:1661.6px;color:#6f7680">42</div>
<div class="code" style="top:1661.6px">  <span class="v">localStorage</span>.<span class="f">setItem</span><span class="b2">(</span><span class="cn">PREFS_KEY</span>, <span class="v">JSON</span>.<span class="f">stringify</span><span class="b3">(</span><span class="v">prefs</span><span class="b3">)</span><span class="b2">)</span>;</div>
<div class="ln" style="top:1697.6px;color:#6f7680">43</div>
<div class="code" style="top:1697.6px"><span class="b1">}</span></div>
<div class="ln" style="top:1733.6px;color:#6f7680">44</div>
<div class="code" style="top:1733.6px"></div>
<div class="ln" style="top:1769.6px;color:#6f7680">45</div>
<div class="code" style="top:1769.6px"><span class="c">function</span> <span class="f">loadProgress</span><span class="b1">()</span>: <span class="ty">Record</span><span class="b1">&lt;</span><span class="ty">string</span>, <span class="ty">ReadingProgress</span><span class="b1">&gt;</span> <span class="b1">{</span></div>
<div class="ln" style="top:1805.6px;color:#6f7680">46</div>
<div class="code" style="top:1805.6px">  <span class="k">if</span> <span class="b2">(</span><span class="c">typeof</span> <span class="v">window</span> === <span class="s">&quot;undefined&quot;</span><span class="b2">)</span> <span class="k">return</span> <span class="b2">{}</span>;</div>
<div class="abs" style="left:776px;top:328px;width:2px;height:252px;background:#464646;"></div>
<div class="abs" style="left:776px;top:688px;width:2px;height:180px;background:#464646;"></div>
<div class="abs" style="left:776px;top:1300px;width:2px;height:252px;background:#464646;"></div>
<div class="abs" style="left:805px;top:1372px;width:2px;height:72px;background:#464646;"></div>
<div class="abs" style="left:805px;top:1480px;width:2px;height:36px;background:#464646;"></div>
<div class="abs" style="left:776px;top:1660px;width:2px;height:36px;background:#464646;"></div>
<div class="abs" style="left:776px;top:1804px;width:2px;height:36px;background:#464646;"></div>
<div class="abs" style="left:776px;top:1840px;width:2px;height:4px;background:#464646;"></div>
<svg style="left:0;top:0;pointer-events:none" width="3024" height="1888" viewBox="0 0 3024 1888" fill="none" stroke-linecap="round" stroke-linejoin="round"><path d="M851.5 35 H828.5 M839.5 24 L828.5 35 L839.5 46" stroke="#d4d4d4" stroke-width="2.2" fill="none" /><path d="M880 35 H902.5 M892 24 L902.5 35 L892 46" stroke="#7c7c7c" stroke-width="2.2" fill="none" /><circle cx="1385.8" cy="31.8" r="8.4" stroke="#b4b4b4" stroke-width="1.8" fill="none"/><path d="M1391.9 38 L1398 44.2" stroke="#b4b4b4" stroke-width="1.8" fill="none" /><path d="M2138 23 H2128.5 a5 5 0 0 0 -5 5 V36 a5 5 0 0 0 5 5 H2129.3 V47.3 L2137.2 41 H2145 a5 5 0 0 0 5 -5 V35.5" stroke="#d4d4d4" stroke-width="2.2" fill="none" /><path d="M2145.5 17.200000000000003 Q2146.1272 22.172800000000002 2151.1 22.8 Q2146.1272 23.4272 2145.5 28.4 Q2144.8728 23.4272 2139.9 22.8 Q2144.8728 22.172800000000002 2145.5 17.200000000000003Z" fill="#d4d4d4" stroke="#d4d4d4" stroke-width="1"/><path d="M2150.6 26.0 Q2151.048 29.552 2154.6 30 Q2151.048 30.448 2150.6 34.0 Q2150.152 30.448 2146.6 30 Q2150.152 29.552 2150.6 26.0Z" fill="#d4d4d4" stroke="#d4d4d4" stroke-width="1"/><path d="M2176 29.8 L2183.5 37.4 L2191 29.8" stroke="#d4d4d4" stroke-width="1.8" fill="none" /><rect x="2809" y="21" width="10.5" height="26" rx="2.5" stroke="#d0d0d0" stroke-width="2" fill="none"/><rect x="2824.5" y="21" width="10.5" height="10" rx="2.5" stroke="#d0d0d0" stroke-width="2" fill="none"/><rect x="2824.5" y="37" width="10.5" height="10" rx="2.5" stroke="#d0d0d0" stroke-width="2" fill="none"/><rect x="2861" y="21" width="26" height="26" rx="5" stroke="#d0d0d0" stroke-width="2" fill="none"/><path d="M2872 21 H2866 a5 5 0 0 0 -5 5 V42 a5 5 0 0 0 5 5 H2872 Z" stroke="none" stroke-width="0" fill="#d0d0d0" /><rect x="2913" y="21" width="26" height="26" rx="5" stroke="#d0d0d0" stroke-width="2" fill="none"/><path d="M2913 39 H2939" stroke="#d0d0d0" stroke-width="2" fill="none" /><rect x="2965" y="21" width="26" height="26" rx="5" stroke="#d0d0d0" stroke-width="2" fill="none"/><path d="M2981 21 V47" stroke="#d0d0d0" stroke-width="2" fill="none" /><path d="M2822.1 104.1 L2815.9 91.7" stroke="#cd7f61" stroke-width="3.8" fill="none" stroke-linecap="round"/><path d="M2823.0 103.9 L2824.2 92.0" stroke="#cd7f61" stroke-width="3" fill="none" stroke-linecap="round"/><path d="M2823.7 104.2 L2831.4 94.8" stroke="#cd7f61" stroke-width="3.6" fill="none" stroke-linecap="round"/><path d="M2824.3 105.1 L2835.5 103.2" stroke="#cd7f61" stroke-width="2.8" fill="none" stroke-linecap="round"/><path d="M2824.3 105.7 L2835.5 108.3" stroke="#cd7f61" stroke-width="3" fill="none" stroke-linecap="round"/><path d="M2823.9 106.4 L2832.9 114.2" stroke="#cd7f61" stroke-width="2.6" fill="none" stroke-linecap="round"/><path d="M2823.5 106.7 L2829.1 116.7" stroke="#cd7f61" stroke-width="2.8" fill="none" stroke-linecap="round"/><path d="M2822.7 106.9 L2821.6 118.3" stroke="#cd7f61" stroke-width="3" fill="none" stroke-linecap="round"/><path d="M2821.9 106.6 L2814.7 116.8" stroke="#cd7f61" stroke-width="2.6" fill="none" stroke-linecap="round"/><path d="M2821.5 106.2 L2811.2 112.5" stroke="#cd7f61" stroke-width="2.8" fill="none" stroke-linecap="round"/><path d="M2821.3 105.3 L2807.8 104.9" stroke="#cd7f61" stroke-width="2.8" fill="none" stroke-linecap="round"/><path d="M2821.6 104.5 L2811.1 97.2" stroke="#cd7f61" stroke-width="3.4" fill="none" stroke-linecap="round"/><circle cx="2822.8" cy="105.4" r="4" stroke="none" stroke-width="0" fill="#cd7f61"/><circle cx="2865.2" cy="95.8" r="4.2" stroke="#d0d0d0" stroke-width="2" fill="none"/><circle cx="2883" cy="114.2" r="4.2" stroke="#d0d0d0" stroke-width="2" fill="none"/><path d="M2865.2 100 V109 a5 5 0 0 0 5 5 H2875.5 M2871.5 109.5 L2876 114 L2871.5 118.5" stroke="#d0d0d0" stroke-width="2" fill="none" /><path d="M2883 110 V101 a5 5 0 0 0 -5 -5 H2872.7 M2876.7 91.5 L2872.2 96 L2876.7 100.5" stroke="#d0d0d0" stroke-width="2" fill="none" /><rect x="2913" y="92" width="26" height="26" rx="5" stroke="#d0d0d0" stroke-width="2" fill="none"/><path d="M2926 92 V118" stroke="#d0d0d0" stroke-width="2" fill="none" /><circle cx="2970" cy="105" r="2.1" stroke="none" stroke-width="0" fill="#d0d0d0"/><circle cx="2978" cy="105" r="2.1" stroke="none" stroke-width="0" fill="#d0d0d0"/><circle cx="2986" cy="105" r="2.1" stroke="none" stroke-width="0" fill="#d0d0d0"/><circle cx="588" cy="105" r="2.1" stroke="none" stroke-width="0" fill="#d0d0d0"/><circle cx="596" cy="105" r="2.1" stroke="none" stroke-width="0" fill="#d0d0d0"/><circle cx="604" cy="105" r="2.1" stroke="none" stroke-width="0" fill="#d0d0d0"/><path d="M452.5 175 H449.5 a4 4 0 0 1 -4 -4 V153.5 a4 4 0 0 1 4 -4 H456 L463 157 V158.5 M455.5 149.5 V154 a3 3 0 0 0 3 3 H463" stroke="#c8c8c8" stroke-width="2" fill="none" /><circle cx="461" cy="169.2" r="9" stroke="none" stroke-width="0" fill="#c8c8c8"/><path d="M461 164 V174.4 M455.8 169.2 H466.2" stroke="#181818" stroke-width="2.2" fill="none" /><path d="M499 173.5 H493.5 a4 4 0 0 1 -4 -4 V155 a4 4 0 0 1 4 -4 H498.5 L503 155 H510.5 a4 4 0 0 1 4 4 V160 M489.5 159.5 H497.5 L502.5 155" stroke="#c8c8c8" stroke-width="2" fill="none" /><circle cx="509" cy="169.2" r="9" stroke="none" stroke-width="0" fill="#c8c8c8"/><path d="M509 164 V174.4 M503.8 169.2 H514.2" stroke="#181818" stroke-width="2.2" fill="none" /><path d="M560.8 162 A11 11 0 1 1 556 153.2 M561 150.5 V157.5 H554" stroke="#c8c8c8" stroke-width="2" fill="none" /><rect x="587.5" y="151.3" width="19.5" height="19.5" rx="4" stroke="#c8c8c8" stroke-width="2" fill="none"/><path d="M592.5 161 H602" stroke="#c8c8c8" stroke-width="2" fill="none" /><path d="M611 157.5 V169.5 a5 5 0 0 1 -5 5 H592" stroke="#c8c8c8" stroke-width="2" fill="none" /><path d="M38.5 96 H51 L64.3 109.3 V129.5 a5 5 0 0 1 -5 5 H38.5 a5 5 0 0 1 -5 -5 V101 a5 5 0 0 1 5 -5 Z M50 96.5 V104.5 a5 5 0 0 0 5 5 H64" stroke="#d7d7d7" stroke-width="3" fill="none" /><path d="M28.5 102 V131 a9.5 9.5 0 0 0 9.5 9.5 H57.5" stroke="#d7d7d7" stroke-width="3" fill="none" /><circle cx="43.6" cy="209.6" r="15" stroke="#868686" stroke-width="3" fill="none"/><path d="M54.6 220.6 L68 234" stroke="#868686" stroke-width="3" fill="none" /><circle cx="37.7" cy="293.6" r="6" stroke="#868686" stroke-width="3" fill="none"/><circle cx="58.5" cy="302.5" r="6" stroke="#868686" stroke-width="3" fill="none"/><path d="M37.7 300 V330 M58.5 309 V314" stroke="#868686" stroke-width="3" fill="none" /><path d="M34 402 V393.5 a3.5 3.5 0 0 1 5 -3 L63 401.5 a3.5 3.5 0 0 1 0.3 6 L50 415.5" stroke="#868686" stroke-width="3" fill="none" /><path d="M28.8 414 a7 7 0 0 1 14 0 V421 a7 7 0 0 1 -14 0 Z M28.8 414 H42.8 M31.5 409.5 a4.3 4.3 0 0 1 8.6 0" stroke="#868686" stroke-width="3" fill="none" /><path d="M24.5 407.5 L29 411.5 M47 407.5 L42.6 411.5 M24 418.5 H28.5 M43 418.5 H47.6 M24.5 429 L29.5 424.5 M47 429 L42 424.5" stroke="#868686" stroke-width="3" fill="none" /><path d="M62 496 V488 a5 5 0 0 0 -5 -5 H31.5 a5 5 0 0 0 -5 5 V507.5 a5 5 0 0 0 5 5 H42 M38 513 V518 M31.5 518.5 H43.5" stroke="#868686" stroke-width="3" fill="none" /><circle cx="58" cy="512" r="13" stroke="none" stroke-width="0" fill="#868686"/><path d="M51.5 513 L56.5 518 L51.5 523 M64.5 501.5 L59.5 506.5 L64.5 511.5" stroke="#181818" stroke-width="2.4" fill="none" transform="translate(0 -0.5)"/><path d="M47.7 599.3 V586 a4 4 0 0 0 -4 -4 H32.5 a4 4 0 0 0 -4 4 V613 a4 4 0 0 0 4 4 H60 a4 4 0 0 0 4 -4 V603 a4 4 0 0 0 -4 -4 H28.5 M47.7 599 V617" stroke="#868686" stroke-width="3" fill="none" /><path d="M57.5 577.5 L68.3 588.3 L57.5 599.1 L46.7 588.3 Z" stroke="#868686" stroke-width="3" fill="none" stroke-linejoin="round"/><path d="M35 674.5 H61 M40.5 675 V690 L31.5 706.5 a4 4 0 0 0 3.5 6 H61 a4 4 0 0 0 3.5 -6 L55.5 690 V675 M35.5 701 H60.5" stroke="#868686" stroke-width="3" fill="none" /><path d="M51 771.5 L69 779.5 V798.5 L45 808.5 L27.5 800.5 V781 Z M27.5 781 L45 788 L69 779.5 M45 788 V808.5 M35.8 784.5 V804.2" stroke="#868686" stroke-width="3" fill="none" stroke-linejoin="round"/><path d="M50.8 791 V802.5 M54.8 789.5 V801 M58.8 788 V799.3 M63 786.5 V797.6" stroke="#868686" stroke-width="2" fill="none" /><circle cx="48" cy="1700" r="19.3" stroke="#868686" stroke-width="3" fill="none"/><circle cx="48" cy="1692" r="6" stroke="none" stroke-width="0" fill="#868686"/><path d="M37.7 1700.6 H58.4 a10.4 12.2 0 0 1 -20.7 0 Z" stroke="none" stroke-width="0" fill="#868686" /><path d="M43.6 1782.7 L43.7 1777.0 L52.3 1777.0 L52.4 1782.7 L56.9 1785.3 L61.9 1782.5 L66.2 1789.9 L61.3 1792.9 L61.3 1798.1 L66.2 1801.1 L61.9 1808.5 L56.9 1805.7 L52.4 1808.3 L52.3 1814.0 L43.7 1814.0 L43.6 1808.3 L39.1 1805.7 L34.1 1808.5 L29.8 1801.1 L34.7 1798.1 L34.7 1792.9 L29.8 1789.9 L34.1 1782.5 L39.1 1785.3Z" stroke="#868686" stroke-width="3" fill="none" stroke-linejoin="round"/><circle cx="48" cy="1795.5" r="4.7" stroke="#868686" stroke-width="3" fill="none"/></svg>
<div class="abs" style="left:28px;top:310px;width:52px;height:32px;background:#3376cd;border-radius:16px"></div>
<div class="t" style="left:36.5px;top:317.4px;font-size:18px;color:#fff;letter-spacing:1.3px;font-weight:700;font-style:normal;">244</div>
<div class="abs" style="left:48px;top:598px;width:32px;height:32px;background:#3376cd;border-radius:50%"></div>
<div class="t" style="left:59px;top:605.4px;font-size:18px;color:#fff;letter-spacing:0px;font-weight:700;font-style:normal;">3</div>
<div class="abs" style="left:48px;top:1796px;width:32px;height:32px;background:#3376cd;border-radius:50%"></div>
<div class="t" style="left:59px;top:1803.4px;font-size:18px;color:#fff;letter-spacing:0px;font-weight:700;font-style:normal;">1</div>
<div class="abs" style="left:0px;top:1844px;width:3024px;height:44px;background:#181818;border-top:2px solid #2b2b2b"></div>
<div class="abs" style="left:2746px;top:1846px;width:210px;height:42px;background:#3a3d42;"></div>
<div class="t" style="left:123.3px;top:1854.5px;font-size:24px;color:#cccccc;letter-spacing:1.051px;font-weight:400;font-style:normal;">ai-native-book</div>
<div class="t" style="left:339.9px;top:1854.5px;font-size:24px;color:#cccccc;letter-spacing:1.123px;font-weight:400;font-style:normal;">ai-native-book*</div>
<div class="t" style="left:632.6px;top:1854.5px;font-size:24px;color:#cccccc;letter-spacing:0px;font-weight:400;font-style:normal;">0</div>
<div class="t" style="left:693.6px;top:1854.5px;font-size:24px;color:#cccccc;letter-spacing:0px;font-weight:400;font-style:normal;">0</div>
<div class="t" style="left:779.2px;top:1854.5px;font-size:24px;color:#cccccc;letter-spacing:0.719px;font-weight:400;font-style:normal;">Update is ready, click to restart.</div>
<div class="t" style="left:2049.4px;top:1854.5px;font-size:24px;color:#cccccc;letter-spacing:0.5px;font-weight:400;font-style:normal;">Ln 1, Col 1</div>
<div class="t" style="left:2204.9px;top:1854.5px;font-size:24px;color:#cccccc;letter-spacing:0.345px;font-weight:400;font-style:normal;">Spaces: 2</div>
<div class="t" style="left:2348.7px;top:1854.5px;font-size:24px;color:#cccccc;letter-spacing:0.755px;font-weight:400;font-style:normal;">UTF-8</div>
<div class="t" style="left:2453.6px;top:1854.5px;font-size:24px;color:#cccccc;letter-spacing:-1.62px;font-weight:400;font-style:normal;">LF</div>
<div class="t" style="left:2557.5px;top:1854.5px;font-size:24px;color:#cccccc;letter-spacing:0.589px;font-weight:400;font-style:normal;">TypeScript JSX</div>
<div class="t" style="left:2516.2px;top:1854.5px;font-size:24px;color:#cccccc;letter-spacing:1.21px;font-weight:400;font-style:normal;">{ }</div>
<div class="t" style="left:2801.6px;top:1854.5px;font-size:24px;color:#cccccc;letter-spacing:0.36px;font-weight:400;font-style:normal;">Finish Setup</div>
<div class="abs" style="left:747.2px;top:1857.8px;width:16.6px;height:16.6px;background:#3376cd;border-radius:50%"></div>
<svg style="left:0;top:0;pointer-events:none" width="3024" height="1888" viewBox="0 0 3024 1888" fill="none" stroke-linecap="round" stroke-linejoin="round"><path d="M26.5 1860.2 L35.6 1868.7 L26.5 1877.2 M45.6 1852.9 L38.6 1861.4 L45.6 1869.8" stroke="#cccccc" stroke-width="2" fill="none" /><path d="M86.8 1867.1 H98.5 M113 1859.5 H102 a3.5 3.5 0 0 0 -3.5 3.5 V1871.5 a3.5 3.5 0 0 0 3.5 3.5 H113 M108.3 1854.6 L113.3 1859.5 L108.3 1864.4 M108.3 1870.1 L113.3 1875 L108.3 1879.9" stroke="#cccccc" stroke-width="1.9" fill="none" /><circle cx="309.5" cy="1855.6" r="3.7" stroke="#cccccc" stroke-width="1.9" fill="none"/><circle cx="309.5" cy="1876.6" r="3.7" stroke="#cccccc" stroke-width="1.9" fill="none"/><path d="M309.5 1859.5 V1872.7 M313.3 1872 H314" stroke="#cccccc" stroke-width="1.9" fill="none" /><path d="M317.5 1862 V1860.5 a5.2 5.2 0 0 1 10.4 0 V1862" stroke="#cccccc" stroke-width="1.9" fill="none" /><circle cx="324.2" cy="1873.8" r="8.6" stroke="none" stroke-width="0" fill="#cccccc"/><path d="M324.2 1869 V1878.6 M320 1871.4 L328.4 1876.2 M328.4 1871.4 L320 1876.2" stroke="#181818" stroke-width="1.7" fill="none" /><path d="M541 1875 H538.5 a6.8 6.8 0 0 1 -1.2 -13.5 a9 9 0 0 1 17.2 -1.5 a6.5 6.5 0 0 1 3.5 3.5" stroke="#cccccc" stroke-width="1.9" fill="none" /><circle cx="552" cy="1873.8" r="9.1" stroke="none" stroke-width="0" fill="#cccccc"/><path d="M552 1879 V1869 M547.6 1873 L552 1868.7 L556.4 1873" stroke="#181818" stroke-width="1.8" fill="none" /><circle cx="608.8" cy="1865.8" r="13" stroke="#cccccc" stroke-width="1.9" fill="none"/><path d="M603.8 1860.8 L613.8 1870.8 M613.8 1860.8 L603.8 1870.8" stroke="#cccccc" stroke-width="1.9" fill="none" /><path d="M669.9 1854.5 L682.3 1875.7 H657.5 Z M669.9 1861.5 V1868.2" stroke="#cccccc" stroke-width="1.9" fill="none" stroke-linejoin="round"/><circle cx="669.9" cy="1871.7" r="1.3" stroke="none" stroke-width="0" fill="#cccccc"/><rect x="2764.6" y="1851.4" width="13.6" height="15" rx="6.2" fill="#cfcfcf"/><rect x="2777.4" y="1851.4" width="13.6" height="15" rx="6.2" fill="#cfcfcf"/><path d="M2766 1862.5 C2761.3 1864.5 2761.5 1869 2761.5 1871 C2761.5 1876.2 2770 1880.2 2777.8 1880.2 C2785.6 1880.2 2794.2 1876.2 2794.2 1871 C2794.2 1869 2794.4 1864.5 2789.7 1862.5 Z" fill="#cfcfcf"/><rect x="2767.9" y="1855.3" width="7.7" height="7.6" rx="3.2" fill="#3a3d42"/><rect x="2780" y="1855.3" width="7.7" height="7.6" rx="3.2" fill="#3a3d42"/><path d="M2767.9 1866.3 H2775 L2777.8 1863.2 L2780.6 1866.3 H2787.8 V1874 C2784 1876 2780.5 1876.8 2777.8 1876.8 C2775 1876.8 2771.5 1876 2767.9 1874 Z" fill="#3a3d42"/><rect x="2772.8" y="1868" width="2.9" height="6" rx="1.45" fill="#cfcfcf"/><rect x="2779.9" y="1868" width="2.9" height="6" rx="1.45" fill="#cfcfcf"/><path d="M2978.8 1869.7 V1862.2 a9.2 9.2 0 0 1 18.4 0 V1869.7 L2999.6 1874.8 H2976.4 Z M2984 1875.2 a4 4.2 0 0 0 8 0" stroke="#cccccc" stroke-width="2" fill="none" stroke-linejoin="round"/></svg>
<div class="abs" style="left:0;top:0;width:3024px;height:1888px;border-radius:17px;border-top:2px solid #b2b2b2;border-left:1px solid #474747;border-right:1px solid #474747;border-bottom:1px solid #474747;pointer-events:none"></div>
</div></body></html>
